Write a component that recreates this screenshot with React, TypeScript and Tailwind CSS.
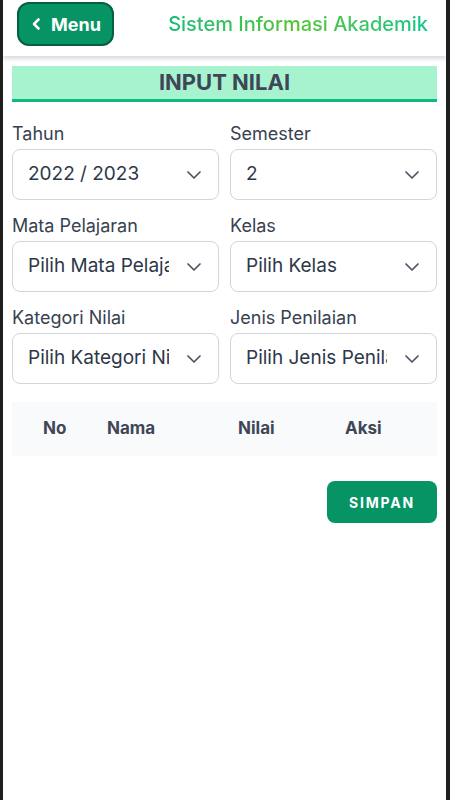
import React from "react";

const Chevron = () => (
  <svg width="16" height="10" viewBox="0 0 16 10" fill="none" stroke="#4b5563" strokeWidth="1.7" strokeLinecap="round" strokeLinejoin="round">
    <path d="M2 2l6 6 6-6" />
  </svg>
);

function Select({ value }: { value: string }) {
  return (
    <div className="flex h-[51px] items-center justify-between rounded-lg border border-gray-300 bg-white pl-[15px] pr-[16px]">
      <span className="mr-[17px] overflow-hidden whitespace-nowrap text-[19px] text-[#2d3748]">{value}</span>
      <span className="shrink-0 flex items-center"><Chevron /></span>
    </div>
  );
}

function Field({ label, value }: { label: string; value: string }) {
  return (
    <div className="flex flex-col">
      <label className="mb-[5px] text-[18px] leading-[21px] text-[#374151]">{label}</label>
      <Select value={value} />
    </div>
  );
}

export default function App() {
  return (
    <div className="h-[800px] overflow-hidden border-l-[3px] border-r-[4px] border-[#1f1f1f] bg-white" style={{ fontFamily: "Inter, 'Noto Sans', sans-serif" }}>
      <header className="flex h-[56px] items-center justify-between bg-white pl-[14px] pr-[18px] shadow-[0_3px_4px_rgba(100,116,139,0.25)]">
        <button className="mb-[8px] flex h-[44px] w-[97px] items-center justify-center gap-[9px] rounded-xl border-2 border-[#075e45] bg-[#069465] text-white">
          <svg width="12" height="16" viewBox="0 0 12 16" fill="none" stroke="white" strokeWidth="2.6" strokeLinecap="round" strokeLinejoin="round">
            <path d="M8.5 3.5L4 8l4.5 4.5" />
          </svg>
          <span className="text-[18px] font-bold">Menu</span>
        </button>
        <span className="mb-[8px] bg-gradient-to-r from-[#12bb78] via-[#52c52c] to-[#10c58a] bg-clip-text text-[20px] font-medium text-transparent">
          Sistem Informasi Akademik
        </span>
      </header>
      <main className="px-[9px] pt-[10px]">
        <div className="flex h-[36px] items-center justify-center border-b-[3px] border-[#10b981] bg-[#a7f3d0]">
          <h1 className="text-[22px] font-bold text-[#3f4656]">INPUT NILAI</h1>
        </div>
        <div className="mt-[21px] grid grid-cols-2 gap-x-[11px] gap-y-[15px]">
          <Field label="Tahun" value="2022 / 2023" />
          <Field label="Semester" value="2" />
          <Field label="Mata Pelajaran" value="Pilih Mata Pelajaran" />
          <Field label="Kelas" value="Pilih Kelas" />
          <Field label="Kategori Nilai" value="Pilih Kategori Nilai" />
          <Field label="Jenis Penilaian" value="Pilih Jenis Penilaian" />
        </div>
        <div className="mt-[18px] flex h-[54px] items-center bg-[#f8fafc] text-[17px] font-bold text-[#3f4656]">
          <span className="ml-[31px] w-[64px]">No</span>
          <span className="w-[131px]">Nama</span>
          <span className="w-[107px]">Nilai</span>
          <span>Aksi</span>
        </div>
        <div className="mt-[25px] flex justify-end">
          <button className="flex h-[42px] w-[110px] items-center justify-center rounded-lg bg-[#069465] text-[14px] font-bold tracking-[0.13em] text-white">
            SIMPAN
          </button>
        </div>
        <div className="mt-[273px] pl-[8px] text-[14px] leading-[20px] text-gray-300">Copyright © Sistem Informasi Akademik 2022 / 2023</div>
      </main>
    </div>
  );
}
